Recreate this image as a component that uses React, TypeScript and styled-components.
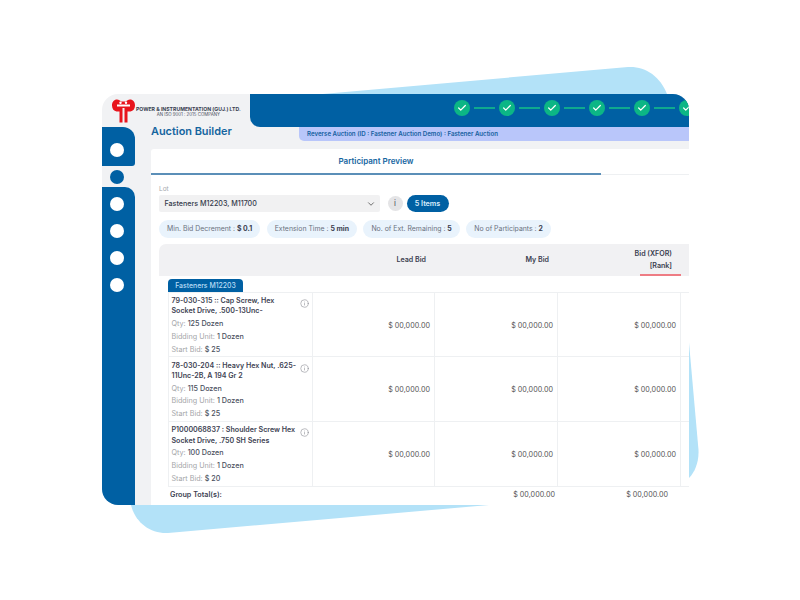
import React from "react";
import styled, { createGlobalStyle } from "styled-components";
import { Check, ChevronDown, Info } from "lucide-react";

const Global = createGlobalStyle`
  html, body { margin: 0; padding: 0; background: #fff; }
  * { box-sizing: border-box; }
  body { font-family: Inter, "Liberation Sans", sans-serif; }
`;

const Stage = styled.div`
  position: relative;
  width: 800px;
  height: 600px;
  padding: 94px 111px 95px 102px;
  overflow: hidden;
  background: #fff;
`;
const Blob = styled.svg`
  position: absolute;
  left: 0;
  top: 0;
`;
const Win = styled.div`
  position: relative;
  width: 587px;
  height: 411px;
  display: grid;
  grid-template-columns: 148px 1fr;
  grid-template-rows: 33px 1fr;
  background: #f1f2f4;
  border-radius: 16px 16px 0 16px;
  overflow: hidden;
`;
const Brand = styled.div`
  display: flex;
  align-items: flex-start;
  padding: 5px 0 0 10px;
`;
const BrandText = styled.div`
  margin: 7px 0 0 1px;
  display: flex;
  flex-direction: column;
  align-items: center;
  white-space: nowrap;
`;
const BrandName = styled.div`
  font-size: 5.15px;
  line-height: 6px;
  font-weight: 700;
  color: #3a3f52;
`;
const BrandSub = styled.div`
  font-size: 4.4px;
  line-height: 5px;
  color: #4a4f5e;
`;
const TopBar = styled.div`
  background: #0060a3;
  border-radius: 0 0 0 10px;
  display: flex;
  align-items: center;
  padding: 0 0 5px 203.5px;
  overflow: hidden;
`;
const Step = styled.span`
  flex: none;
  width: 16px;
  height: 16px;
  border-radius: 50%;
  background: #0cb685;
  color: #fff;
  display: flex;
  align-items: center;
  justify-content: center;
`;
const Connector = styled.span`
  flex: none;
  width: 21px;
  height: 2px;
  margin: 0 4px;
  background: #0fa98e;
`;
const Body = styled.div`
  grid-column: 1 / 3;
  display: grid;
  grid-template-columns: 33px 1fr;
  min-height: 0;
`;
const Rail = styled.div`
  display: flex;
  flex-direction: column;
  min-height: 0;
`;
const RailTop = styled.div`
  height: 39px;
  flex: none;
  background: #0060a3;
  border-radius: 0 12px 3px 0;
  padding: 16px 3px 0 0;
  display: flex;
  justify-content: center;
`;
const RailGap = styled.div`
  height: 21px;
  flex: none;
  padding-right: 3px;
  display: flex;
  align-items: center;
  justify-content: center;
`;
const RailBottom = styled.div`
  flex: 1;
  background: #0060a3;
  border-radius: 0 10px 0 0;
  padding: 10px 3px 0 0;
  display: flex;
  flex-direction: column;
  align-items: center;
  gap: 13px;
`;
const Dot = styled.span<{ $blue?: boolean }>`
  flex: none;
  width: 14px;
  height: 14px;
  border-radius: 50%;
  background: ${(p) => (p.$blue ? "#0060a3" : "#fff")};
`;
const Main = styled.div`
  min-width: 0;
  padding-left: 16px;
  display: flex;
  flex-direction: column;
`;
const TitleRow = styled.div`
  height: 22px;
  flex: none;
  display: flex;
  align-items: flex-start;
  justify-content: space-between;
`;
const Title = styled.div`
  font-size: 10.9px;
  line-height: 13px;
  font-weight: 600;
  color: #14659f;
  white-space: nowrap;
  margin-top: -2px;
`;
const Banner = styled.div`
  width: 390px;
  height: 14px;
  padding-left: 8px;
  background: #b9c6fa;
  border-radius: 0 0 0 5px;
  font-size: 6.15px;
  line-height: 14px;
  font-weight: 600;
  color: #15609f;
  white-space: nowrap;
`;
const Card = styled.div`
  flex: 1;
  min-height: 0;
  background: #fff;
  border-radius: 3px 0 0 0;
  overflow: hidden;
`;
const Tabs = styled.div`
  display: grid;
  grid-template-columns: 450px 1fr;
  height: 25px;
`;
const ActiveTab = styled.div`
  border-bottom: 2px solid #5b8fb8;
  font-size: 8px;
  line-height: 24px;
  font-weight: 600;
  color: #14659f;
  text-align: center;
`;
const RestTab = styled.div`
  border-bottom: 1px solid #eef0f2;
`;
const Content = styled.div`
  padding: 10.5px 0 0 8px;
`;
const Label = styled.div`
  font-size: 6.5px;
  line-height: 8px;
  color: #a4a7ad;
`;
const LotRow = styled.div`
  display: flex;
  align-items: center;
  margin-top: 2.5px;
`;
const Select = styled.div`
  width: 220.5px;
  height: 17px;
  padding: 0 4px 0 5.5px;
  background: #f1f1f2;
  border-radius: 2px;
  display: flex;
  align-items: center;
  justify-content: space-between;
  font-size: 7.15px;
  font-weight: 500;
  color: #343a4a;
`;
const InfoBtn = styled.div`
  width: 15px;
  height: 15px;
  margin-left: 8px;
  border-radius: 50%;
  background: #e4e4e6;
  font-size: 8px;
  line-height: 15px;
  text-align: center;
  color: #4a4d55;
`;
const ItemsPill = styled.div`
  width: 42px;
  height: 17px;
  margin-left: 4px;
  border-radius: 9px;
  background: #0060a3;
  color: #d8ecfb;
  font-size: 7.2px;
  font-weight: 600;
  line-height: 17px;
  text-align: center;
`;
const Chips = styled.div`
  display: flex;
  gap: 6.5px;
  margin-top: 7.5px;
`;
const Chip = styled.div`
  height: 18px;
  padding: 0 8px;
  border-radius: 9px;
  background: #e9f3fc;
  font-size: 6.9px;
  line-height: 18px;
  color: #6b7280;
  white-space: nowrap;
  b {
    font-weight: 700;
    color: #3b4050;
  }
`;
const TableBox = styled.div`
  margin-top: 6px;
`;
const HeadRow = styled.div`
  display: grid;
  grid-template-columns: 153px 122px 123px 123px;
  height: 32px;
  background: #f1f1f3;
  border-radius: 7px 0 0 0;
  position: relative;
`;
const HeadCell = styled.div`
  padding-right: 8px;
  display: flex;
  flex-direction: column;
  justify-content: center;
  align-items: flex-end;
  font-size: 7.1px;
  line-height: 11.5px;
  font-weight: 600;
  color: #3b4050;
  text-align: right;
  white-space: nowrap;
`;
const RankMark = styled.span`
  position: absolute;
  left: 481px;
  bottom: 0;
  width: 41px;
  height: 1.5px;
  background: #ee7c84;
`;
const Group = styled.div`
  padding: 3px 0 0 9px;
`;
const GroupTag = styled.div`
  width: 75px;
  height: 13px;
  background: #0060a3;
  border-radius: 4px 4px 0 0;
  color: #b9dcf5;
  font-size: 6.9px;
  line-height: 13px;
  text-align: center;
  font-weight: 500;
`;
const Row = styled.div`
  display: grid;
  grid-template-columns: 143.5px 122.5px 123px 123px 12px;
  height: 64.7px;
  border-top: 1px solid #eef0f2;
`;
const Cell = styled.div`
  border-left: 1px solid #eef0f2;
  display: flex;
  align-items: center;
  justify-content: flex-end;
  padding: 1.5px 4px 0 0;
  font-size: 7.2px;
  color: #555;
`;
const ItemCell = styled.div`
  position: relative;
  border-left: 1px solid #eef0f2;
  padding: 3.5px 18px 0 2.5px;
`;
const ItemName = styled.div`
  font-size: 7.1px;
  line-height: 10.3px;
  font-weight: 600;
  color: #3d4252;
  margin-bottom: 1.5px;
  white-space: nowrap;
`;
const Meta = styled.div`
  font-size: 7.2px;
  line-height: 12.7px;
  color: #a3a5a8;
  white-space: nowrap;
  b {
    font-weight: 500;
    color: #4a4f5e;
  }
`;
const InfoMark = styled.span`
  position: absolute;
  right: 3px;
  top: 6.5px;
  display: flex;
  color: #85888f;
`;
const TotalRow = styled.div`
  display: grid;
  grid-template-columns: 272px 113px 113px;
  height: 16px;
  align-items: center;
  padding-left: 2px;
  border-top: 1px solid #eef0f2;
  font-size: 7.2px;
  color: #555;
`;
const TotalLabel = styled.div`
  font-weight: 600;
  color: #3d4252;
`;
const TotalValue = styled.div`
  text-align: right;
`;

const items = [
  { name: ["79-030-315 :: Cap Screw, Hex", "Socket Drive, .500-13Unc-"], qty: "125 Dozen", bid: "$ 25" },
  { name: ["78-030-204 :: Heavy Hex Nut, .625-", "11Unc-2B, A 194 Gr 2"], qty: "115 Dozen", bid: "$ 25" },
  { name: ["P1000068837 : Shoulder Screw Hex", "Socket Drive, .750 SH Series"], qty: "100 Dozen", bid: "$ 20" },
];

const Logo = () => (
  <svg width="23" height="24" viewBox="0 0 23 24" style={{ flex: "none" }}>
    <path
      d="M5 0.5 C7 0.5 8 1.5 9 2.5 L14 2.5 C15 1.5 16 0.5 18 0.5 C21 0.5 23 3 23 6.5 C23 10 21 12 18.5 12.5 L15.5 12.5 L15.5 23.5 L12.5 23.5 L12.5 9 L10.5 9 L10.5 23.5 L7.5 23.5 L7.5 12.5 L4.5 12.5 C2 12 0 10 0 6.5 C0 3 2 0.5 5 0.5 Z"
      fill="#e8141c"
    />
    <rect x="5" y="5.5" width="13" height="2" fill="#fff" />
    <circle cx="8.5" cy="3.8" r="1.2" fill="#fff" />
    <circle cx="14" cy="3.8" r="1.2" fill="#fff" />
  </svg>
);

export default function App() {
  return (
    <Stage>
      <Global />
      <Blob width="800" height="600" viewBox="0 0 800 600">
        <path
          d="M131 505 C135 522 150 534 168 533 L489 505 L689 478 C695 472 699 462 698.5 450 L667 94 C660 76 645 66 628 67 L300 96 Z"
          fill="#b3e2f8"
        />
      </Blob>
      <Win>
        <Brand>
          <Logo />
          <BrandText>
            <BrandName>POWER &amp; INSTRUMENTATION (GUJ.) LTD.</BrandName>
            <BrandSub>AN ISO 9001 : 2015 COMPANY</BrandSub>
          </BrandText>
        </Brand>
        <TopBar>
          {[0, 1, 2, 3, 4, 5].map((i) => (
            <React.Fragment key={i}>
              <Step>
                <Check size={10} strokeWidth={3} />
              </Step>
              {i < 5 && <Connector />}
            </React.Fragment>
          ))}
        </TopBar>
        <Body>
          <Rail>
            <RailTop>
              <Dot />
            </RailTop>
            <RailGap>
              <Dot $blue />
            </RailGap>
            <RailBottom>
              <Dot />
              <Dot />
              <Dot />
              <Dot />
            </RailBottom>
          </Rail>
          <Main>
            <TitleRow>
              <Title>Auction Builder</Title>
              <Banner>Reverse Auction (ID : Fastener Auction Demo) : Fastener Auction</Banner>
            </TitleRow>
            <Card>
              <Tabs>
                <ActiveTab>Participant Preview</ActiveTab>
                <RestTab />
              </Tabs>
              <Content>
                <Label>Lot</Label>
                <LotRow>
                  <Select>
                    Fasteners M12203, M11700
                    <ChevronDown size={10} color="#555" />
                  </Select>
                  <InfoBtn>i</InfoBtn>
                  <ItemsPill>5 Items</ItemsPill>
                </LotRow>
                <Chips>
                  <Chip>
                    Min. Bid Decrement : <b>$ 0.1</b>
                  </Chip>
                  <Chip>
                    Extension Time : <b>5 min</b>
                  </Chip>
                  <Chip>
                    No. of Ext. Remaining : <b>5</b>
                  </Chip>
                  <Chip>
                    No of Participants : <b>2</b>
                  </Chip>
                </Chips>
                <TableBox>
                  <HeadRow>
                    <HeadCell />
                    <HeadCell>Lead Bid</HeadCell>
                    <HeadCell>My Bid</HeadCell>
                    <HeadCell>
                      <span>Bid (XFOR)</span>
                      <span>[Rank]</span>
                    </HeadCell>
                    <RankMark />
                  </HeadRow>
                  <Group>
                    <GroupTag>Fasteners M12203</GroupTag>
                    {items.map((it) => (
                      <Row key={it.qty}>
                        <ItemCell>
                          <ItemName>
                            {it.name[0]}
                            <br />
                            {it.name[1]}
                          </ItemName>
                          <Meta>
                            Qty: <b>{it.qty}</b>
                          </Meta>
                          <Meta>
                            Bidding Unit: <b>1 Dozen</b>
                          </Meta>
                          <Meta>
                            Start Bid: <b>{it.bid}</b>
                          </Meta>
                          <InfoMark>
                            <Info size={9} strokeWidth={1.5} />
                          </InfoMark>
                        </ItemCell>
                        <Cell>$ 00,000.00</Cell>
                        <Cell>$ 00,000.00</Cell>
                        <Cell>$ 00,000.00</Cell>
                        <Cell />
                      </Row>
                    ))}
                    <TotalRow>
                      <TotalLabel>Group Total(s):</TotalLabel>
                      <TotalValue>$ 00,000.00</TotalValue>
                      <TotalValue>$ 00,000.00</TotalValue>
                    </TotalRow>
                  </Group>
                </TableBox>
              </Content>
            </Card>
          </Main>
        </Body>
      </Win>
    </Stage>
  );
}
